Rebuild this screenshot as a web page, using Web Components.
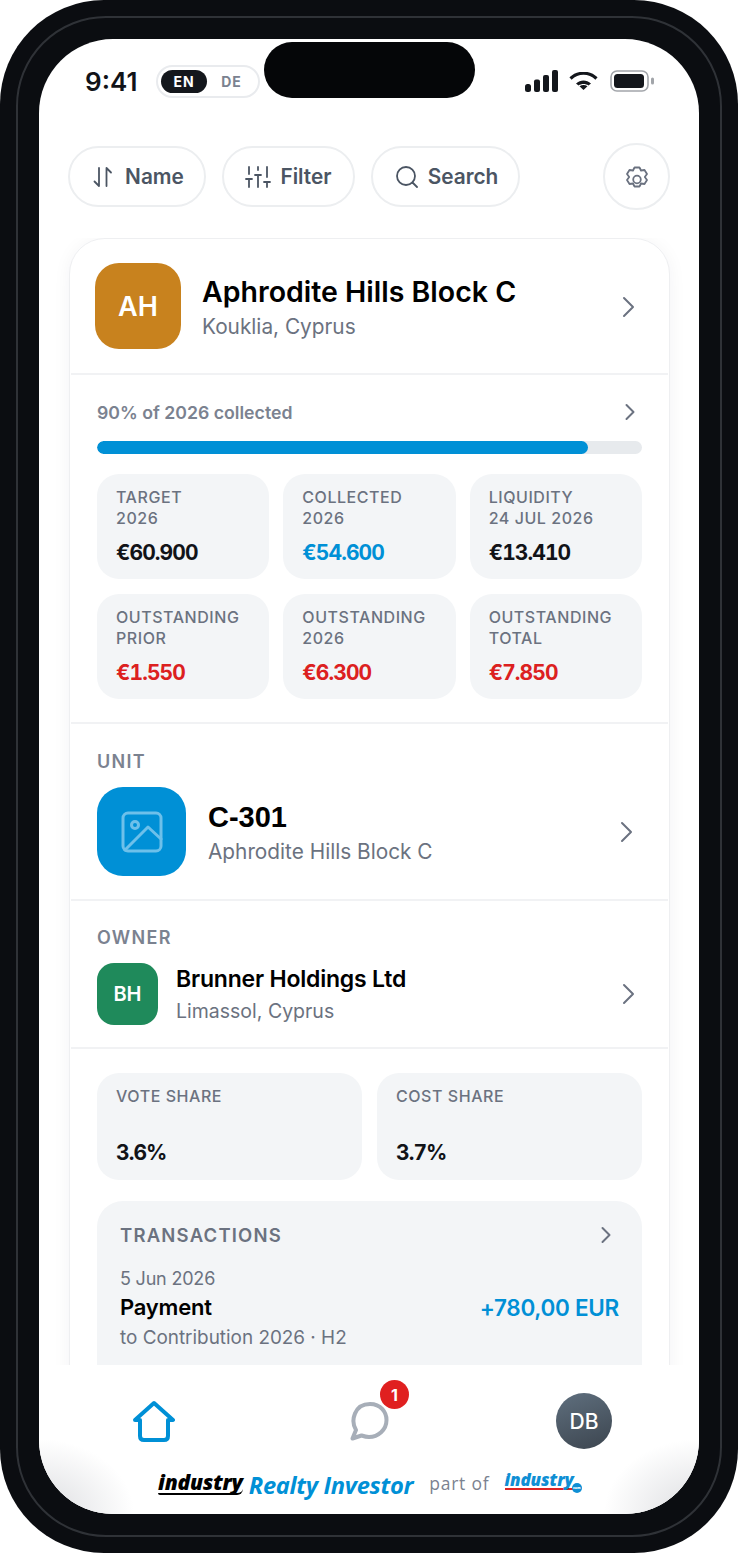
<!DOCTYPE html>
<html>
<head>
<meta charset="utf-8">
<style>
  html, body { margin: 0; padding: 0; background: #fff; }
</style>
</head>
<body>
<phone-frame>
  <status-bar slot="status"></status-bar>
  <tool-bar slot="tools">
    <tool-pill icon="sort" w="138" gap="11" pad="2">Name</tool-pill>
    <tool-pill icon="filter" w="133" gap="9" pad="0">Filter</tool-pill>
    <tool-pill icon="search" w="149" gap="10" pad="3">Search</tool-pill>
    <gear-button></gear-button>
  </tool-bar>
  <property-card slot="content">
    <card-head initials="AH" title="Aphrodite Hills Block C" sub="Kouklia, Cyprus"></card-head>
    <collect-progress label="90% of 2026 collected" value="90"></collect-progress>
    <tile-grid cols="3">
      <stat-tile l1="TARGET" l2="2026" value="€60.900"></stat-tile>
      <stat-tile l1="COLLECTED" l2="2026" value="€54.600" tone="blue"></stat-tile>
      <stat-tile l1="LIQUIDITY" l2="24 JUL 2026" value="€13.410"></stat-tile>
      <stat-tile l1="OUTSTANDING" l2="PRIOR" value="€1.550" tone="red"></stat-tile>
      <stat-tile l1="OUTSTANDING" l2="2026" value="€6.300" tone="red"></stat-tile>
      <stat-tile l1="OUTSTANDING" l2="TOTAL" value="€7.850" tone="red"></stat-tile>
    </tile-grid>
    <unit-row></unit-row>
    <owner-row></owner-row>
    <tile-grid cols="2">
      <stat-tile tall l1="VOTE SHARE" l2="&nbsp;" value="3.6%"></stat-tile>
      <stat-tile tall l1="COST SHARE" l2="&nbsp;" value="3.7%"></stat-tile>
    </tile-grid>
    <transactions-box></transactions-box>
  </property-card>
  <bottom-nav slot="nav"></bottom-nav>
</phone-frame>

<script>
const FONT = '"Inter", "Liberation Sans", sans-serif';
const CHEVRON = `<svg width="14" height="22" viewBox="0 0 14 22" fill="none" stroke="#6b7280" stroke-width="2" stroke-linecap="round" stroke-linejoin="round"><path d="M3 2l9 9-9 9"/></svg>`;
const CHEVRON_SM = `<svg width="12" height="18" viewBox="0 0 12 18" fill="none" stroke="#6b7280" stroke-width="2" stroke-linecap="round" stroke-linejoin="round"><path d="M2.500 2l7 7-7 7"/></svg>`;

class PhoneFrame extends HTMLElement {
  constructor() {
    super();
    this.attachShadow({ mode: 'open' }).innerHTML = `
      <style>
        :host { display: block; position: relative; width: 738px; height: 1553px; box-sizing: border-box; padding: 39px; background: #0b0d11; border-radius: 104px; font-family: ${FONT}; overflow: hidden; }
        .ring { position: absolute; inset: 16px; border: 2px solid #2f3237; border-radius: 90px; pointer-events: none; }
        .island { position: absolute; left: 264px; top: 42px; width: 211px; height: 56px; border-radius: 28px; background: #050608; }
        .screen { width: 660px; height: 1475px; background: #fff; border-radius: 74px; overflow: hidden; display: flex; flex-direction: column; }
        .scroll { flex: 1; min-height: 0; overflow: hidden; padding: 0 30px; }
      </style>
      <div class="ring"></div>
      <div class="screen">
        <slot name="status"></slot>
        <slot name="tools"></slot>
        <div class="scroll"><slot name="content"></slot></div>
        <slot name="nav"></slot>
      </div>
      <div class="island"></div>`;
  }
}
customElements.define('phone-frame', PhoneFrame);

class StatusBar extends HTMLElement {
  constructor() {
    super();
    this.attachShadow({ mode: 'open' }).innerHTML = `
      <style>
        :host { display: flex; align-items: center; height: 84px; padding: 0 44px 0 46px; box-sizing: border-box; }
        .time { font-size: 26px; font-weight: 600; color: #111318; width: 71px; }
        .lang { display: flex; align-items: center; width: 104px; height: 33px; box-sizing: border-box; border: 2px solid #e9ebee; border-radius: 17px; padding: 0 3px; font-size: 14px; font-weight: 700; letter-spacing: 1px; }
        .on { width: 46px; height: 23px; line-height: 23px; border-radius: 12px; background: #14171c; color: #fff; text-align: center; }
        .off { flex: 1; text-align: center; color: #7b8290; padding-left: 1px; }
        .right { margin-left: auto; display: flex; align-items: center; gap: 11px; }
        .batt { margin-left: 1px; }
      </style>
      <span class="time">9:41</span>
      <div class="lang"><span class="on">EN</span><span class="off">DE</span></div>
      <div class="right">
        <svg width="33" height="22" viewBox="0 0 33 22" fill="#14171c"><rect x="0" y="14" width="6" height="8" rx="2.500"/><rect x="9" y="9.500" width="6" height="12.500" rx="2"/><rect x="18" y="5" width="6" height="17" rx="2"/><rect x="27" y="0" width="6" height="22" rx="2"/></svg>
        <svg width="29" height="18" viewBox="0 0 29 18"><path d="M1.500 6.500C9 -0.500 20 -0.500 27.500 6.500" fill="none" stroke="#14171c" stroke-width="3.200"/><path d="M7 11.500C11.500 7.500 17.500 7.500 22 11.500L19.500 13.500C16.500 11.500 12.500 11.500 9.500 13.500Z" fill="#14171c"/><path d="M10.500 14.200C13 12.700 16 12.700 18.500 14.200L14.500 18Z" fill="#14171c"/></svg>
        <svg class="batt" width="45" height="22" viewBox="0 0 45 22"><rect x="1" y="1" width="37" height="20" rx="6" fill="none" stroke="#a2a5aa" stroke-width="1.600"/><rect x="4" y="4" width="30" height="14" rx="3.500" fill="#14171c"/><rect x="41" y="7.500" width="3" height="7" rx="1.500" fill="#a2a5aa"/></svg>
      </div>`;
  }
}
customElements.define('status-bar', StatusBar);

class ToolBar extends HTMLElement {
  constructor() {
    super();
    this.attachShadow({ mode: 'open' }).innerHTML = `
      <style>
        :host { display: flex; align-items: center; gap: 16px; height: 67px; padding: 20px 29px 28px 29px; }
      </style>
      <slot></slot>`;
  }
}
customElements.define('tool-bar', ToolBar);

const TOOL_ICONS = {
  sort: `<svg width="22" height="22" viewBox="0 0 22 22" fill="none" stroke="#4b5563" stroke-width="1.800" stroke-linecap="round" stroke-linejoin="round"><path d="M7 2v18L2.500 15.500"/><path d="M14.500 20V2L19 6.500"/></svg>`,
  filter: `<svg width="26" height="22" viewBox="0 0 26 22" fill="none" stroke="#4b5563" stroke-width="1.800" stroke-linecap="round"><path d="M4 1v7M4 13v8M13 1v3M13 9v12M22 1v10M22 16v5M1 13h6M10 9h6M19 16h6"/></svg>`,
  search: `<svg width="22" height="22" viewBox="0 0 22 22" fill="none" stroke="#4b5563" stroke-width="1.800" stroke-linecap="round"><circle cx="10" cy="10" r="9"/><path d="M16.500 16.500L21 21"/></svg>`
};

class ToolPill extends HTMLElement {
  constructor() {
    super();
    this.attachShadow({ mode: 'open' });
  }
  connectedCallback() {
    const icon = TOOL_ICONS[this.getAttribute('icon')] || '';
    const w = this.getAttribute('w');
    this.shadowRoot.innerHTML = `
      <style>
        :host { display: flex; align-items: center; justify-content: center; gap: ${this.getAttribute('gap')}px; padding-left: ${this.getAttribute('pad')}px; width: ${w}px; height: 61px; box-sizing: border-box; border: 2px solid #eceef0; border-radius: 31px; font-size: 20.800px; font-weight: 600; color: #4b5563; }
        svg { display: block; }
      </style>
      ${icon}<slot></slot>`;
  }
}
customElements.define('tool-pill', ToolPill);

class GearButton extends HTMLElement {
  constructor() {
    super();
    this.attachShadow({ mode: 'open' }).innerHTML = `
      <style>
        :host { display: flex; align-items: center; justify-content: center; width: 67px; height: 67px; box-sizing: border-box; border: 2px solid #eceef0; border-radius: 50%; margin-left: auto; }
      </style>
      <svg width="22" height="22" viewBox="0 0 22 22" fill="none" stroke="#6b7280" stroke-width="1.800" stroke-linejoin="round"><path d="M8.500 1.500H13.500L15 4.500L18.500 4L21 8L18.800 11L21 14L18.500 18L15 17.500L13.500 20.500H8.500L7 17.500L3.500 18L1 14L3.200 11L1 8L3.500 4L7 4.500Z"/><circle cx="11" cy="13.500" r="3.800"/></svg>`;
  }
}
customElements.define('gear-button', GearButton);

class PropertyCard extends HTMLElement {
  constructor() {
    super();
    this.attachShadow({ mode: 'open' }).innerHTML = `
      <style>
        :host { display: block; box-sizing: border-box; width: 601px; height: 1500px; border: 1px solid #eeeff1; padding: 1px 1px 0; border-radius: 36px; box-shadow: 0 2px 18px rgba(20,30,50,.05); background: #fff; }
      </style>
      <slot></slot>`;
  }
}
customElements.define('property-card', PropertyCard);

class CardHead extends HTMLElement {
  constructor() {
    super();
    this.attachShadow({ mode: 'open' });
  }
  connectedCallback() {
    this.shadowRoot.innerHTML = `
      <style>
        :host { display: flex; align-items: center; height: 135px; box-sizing: border-box; padding: 0 33px 0 24px; border-bottom: 2px solid #f1f2f4; }
        .av { width: 86px; height: 86px; border-radius: 24px; background: #c8821e; color: #fff; font-size: 27px; font-weight: 600; display: flex; align-items: center; justify-content: center; flex: none; margin-top: -1px; }
        .txt { margin-left: 21px; flex: 1; margin-top: 1px; }
        .t { font-size: 28.500px; font-weight: 600; color: #000; line-height: 36px; white-space: nowrap; }
        .s { font-size: 20.800px; color: #6b7280; line-height: 26px; margin-top: 4px; }
      </style>
      <div class="av">${this.getAttribute('initials')}</div>
      <div class="txt"><div class="t">${this.getAttribute('title')}</div><div class="s">${this.getAttribute('sub')}</div></div>
      ${CHEVRON}`;
  }
}
customElements.define('card-head', CardHead);

class CollectProgress extends HTMLElement {
  constructor() {
    super();
    this.attachShadow({ mode: 'open' });
  }
  connectedCallback() {
    this.shadowRoot.innerHTML = `
      <style>
        :host { display: block; padding: 24px 26px 0 26px; }
        .top { display: flex; align-items: center; justify-content: space-between; height: 26px; padding-right: 6px; font-size: 17.700px; font-weight: 600; color: #7b8290; }
        .track { height: 13px; margin-top: 16px; border-radius: 7px; background: #e7eaed; overflow: hidden; }
        .fill { height: 100%; width: ${this.getAttribute('value')}%; border-radius: 7px; background: #0090d6; }
      </style>
      <div class="top"><span>${this.getAttribute('label')}</span>${CHEVRON_SM}</div>
      <div class="track"><div class="fill"></div></div>`;
  }
}
customElements.define('collect-progress', CollectProgress);

class TileGrid extends HTMLElement {
  constructor() {
    super();
    this.attachShadow({ mode: 'open' });
  }
  connectedCallback() {
    const two = this.getAttribute('cols') === '2';
    this.shadowRoot.innerHTML = `
      <style>
        :host { display: grid; grid-template-columns: repeat(${this.getAttribute('cols')}, 1fr); column-gap: ${two ? 15 : 14}px; row-gap: 15px; padding: ${two ? '24px 26px 0' : '20px 26px 23px'}; }
      </style>
      <slot></slot>`;
  }
}
customElements.define('tile-grid', TileGrid);

class StatTile extends HTMLElement {
  constructor() {
    super();
    this.attachShadow({ mode: 'open' });
  }
  connectedCallback() {
    const tone = { blue: '#0090d6', red: '#dc2020' }[this.getAttribute('tone')] || '#111318';
    const tall = this.hasAttribute('tall');
    this.shadowRoot.innerHTML = `
      <style>
        :host { display: block; height: ${tall ? 107 : 105}px; box-sizing: border-box; padding: 13px 10px 0 19px; border-radius: 22px; background: #f3f5f7; }
        .l { font-size: 16px; line-height: 21px; font-weight: 500; color: #6b7280; letter-spacing: .55px; white-space: nowrap; }
        .v { font-size: 21px; line-height: 28px; font-weight: 700; letter-spacing: -.9px; font-variant-numeric: tabular-nums; color: ${tone}; margin-top: ${tall ? 11 : 10}px; }
      </style>
      <div class="l">${this.getAttribute('l1')}</div>
      <div class="l">${this.getAttribute('l2')}</div>
      <div class="v">${this.getAttribute('value')}</div>`;
  }
}
customElements.define('stat-tile', StatTile);

class UnitRow extends HTMLElement {
  constructor() {
    super();
    this.attachShadow({ mode: 'open' }).innerHTML = `
      <style>
        :host { display: block; height: 179px; box-sizing: border-box; padding: 26px 35px 0 26px; border-top: 2px solid #f1f2f4; border-bottom: 2px solid #f1f2f4; }
        .h { font-size: 18px; font-weight: 600; color: #7b8290; letter-spacing: 1.300px; line-height: 24px; }
        .row { display: flex; align-items: center; margin-top: 13px; }
        .pic { width: 89px; height: 89px; border-radius: 26px; background: #0090d6; display: flex; align-items: center; justify-content: center; flex: none; }
        .txt { margin-left: 22px; flex: 1; }
        .t { font-family: "Liberation Sans", sans-serif; font-size: 29px; font-weight: 700; color: #000; line-height: 36px; }
        .s { font-size: 20.800px; color: #6b7280; line-height: 26px; margin-top: 4px; }
      </style>
      <div class="h">UNIT</div>
      <div class="row">
        <div class="pic"><svg width="42" height="42" viewBox="0 0 42 42" fill="none" stroke="#6dc0ea" stroke-width="3" stroke-linejoin="round" stroke-linecap="round"><rect x="2" y="2" width="38" height="38" rx="5"/><circle cx="14" cy="14" r="3.500"/><path d="M4 39L27 16L40 28"/></svg></div>
        <div class="txt"><div class="t">C-301</div><div class="s">Aphrodite Hills Block C</div></div>
        ${CHEVRON}
      </div>`;
  }
}
customElements.define('unit-row', UnitRow);

class OwnerRow extends HTMLElement {
  constructor() {
    super();
    this.attachShadow({ mode: 'open' }).innerHTML = `
      <style>
        :host { display: block; height: 148px; box-sizing: border-box; padding: 25px 33px 0 26px; border-bottom: 2px solid #f1f2f4; }
        .h { font-size: 18px; font-weight: 600; color: #7b8290; letter-spacing: 1.300px; line-height: 24px; }
        .row { display: flex; align-items: center; margin-top: 13px; }
        .av { width: 61px; height: 62px; border-radius: 17px; background: #1f8a5b; color: #fff; font-size: 20px; font-weight: 600; display: flex; align-items: center; justify-content: center; flex: none; }
        .txt { margin-left: 18px; flex: 1; }
        .t { font-size: 23px; font-weight: 600; color: #000; line-height: 30px; letter-spacing: -0.200px; }
        .s { font-size: 19.500px; color: #6b7280; line-height: 26px; margin-top: 4px; }
      </style>
      <div class="h">OWNER</div>
      <div class="row">
        <div class="av">BH</div>
        <div class="txt"><div class="t">Brunner Holdings Ltd</div><div class="s">Limassol, Cyprus</div></div>
        ${CHEVRON}
      </div>`;
  }
}
customElements.define('owner-row', OwnerRow);

class TransactionsBox extends HTMLElement {
  constructor() {
    super();
    this.attachShadow({ mode: 'open' }).innerHTML = `
      <style>
        :host { display: block; margin: 21px 26px 0; padding: 21px 23px 70px; border-radius: 26px; background: #f3f5f7; }
        .top { display: flex; align-items: center; justify-content: space-between; height: 26px; padding-right: 7px; font-size: 18.500px; font-weight: 600; color: #6b7280; letter-spacing: 1.200px; }
        .d { font-size: 18px; letter-spacing: -0.200px; color: #6b7280; line-height: 24px; margin-top: 19px; }
        .mid { display: flex; align-items: center; justify-content: space-between; margin-top: 1px; }
        .p { font-size: 22px; font-weight: 600; color: #000; line-height: 30px; letter-spacing: -0.200px; }
        .a { font-size: 22.500px; font-weight: 600; color: #0090d6; letter-spacing: -0.300px; }
        .s { font-size: 18.900px; color: #6b7280; line-height: 26px; margin-top: 3px; }
      </style>
      <div class="top"><span>TRANSACTIONS</span>${CHEVRON_SM}</div>
      <div class="d">5 Jun 2026</div>
      <div class="mid"><span class="p">Payment</span><span class="a">+780,00 EUR</span></div>
      <div class="s">to Contribution 2026 · H2</div>`;
  }
}
customElements.define('transactions-box', TransactionsBox);

class BottomNav extends HTMLElement {
  constructor() {
    super();
    this.attachShadow({ mode: 'open' }).innerHTML = `
      <style>
        :host { display: block; height: 149px; box-sizing: border-box; background: radial-gradient(95px 75px at 0% 100%, #dcdde0, rgba(255,255,255,0)), radial-gradient(95px 75px at 100% 100%, #dcdde0, rgba(255,255,255,0)), #fff; }
        .icons { display: grid; grid-template-columns: 230px 1fr 230px; height: 112px; align-items: center; justify-items: center; }
        .home { justify-self: start; margin-left: 94px; }
        .chat { position: relative; width: 40px; height: 40px; }
        .badge { position: absolute; left: 31px; top: -21px; width: 29px; height: 29px; border-radius: 50%; background: #e02020; color: #fff; font-size: 16px; font-weight: 700; display: flex; align-items: center; justify-content: center; }
        .db { justify-self: end; margin-right: 87px; width: 56px; height: 56px; border-radius: 50%; background: linear-gradient(160deg, #5f6f7e, #3c454f); color: #fff; font-size: 21px; font-weight: 500; display: flex; align-items: center; justify-content: center; }
        .foot { display: flex; align-items: center; height: 30px; padding-left: 119px; font-family: "Open Sans", sans-serif; white-space: nowrap; margin-top: -9px; }
        .ind { font-size: 21px; font-weight: 800; font-style: italic; color: #000; border-bottom: 2.500px solid #000; border-radius: 0 0 6px 2px; line-height: 21px; letter-spacing: -.2px; }
        .ri { font-size: 23.700px; font-weight: 700; font-style: italic; color: #0090d6; margin-left: 6px; margin-top: 3px; letter-spacing: -0.300px; }
        .po { font-size: 17.500px; font-weight: 500; color: #7b8290; margin-left: 16px; letter-spacing: .8px; }
        .ic { position: relative; margin-left: 15px; font-size: 17px; font-weight: 800; font-style: italic; color: #0f8fd4; border-bottom: 2.500px solid #dc2626; line-height: 17px; letter-spacing: -.1px; margin-top: -6px; }
        .dot { position: absolute; right: -8px; top: 12px; width: 10px; height: 10px; border-radius: 50%; background: #0f8fd4; color: #fff; font-size: 3.500px; line-height: 10px; text-align: center; font-style: normal; }
      </style>
      <div class="icons">
        <svg class="home" width="42" height="42" viewBox="0 0 42 42" fill="none" stroke="#0090d6" stroke-width="4" stroke-linejoin="round" stroke-linecap="round"><path d="M2 20L21 3L40 20H35V36Q35 40 31 40H11Q7 40 7 36V20Z"/></svg>
        <div class="chat">
          <svg width="40" height="40" viewBox="0 0 40 40" fill="none" stroke="#a7aeb8" stroke-width="4" stroke-linejoin="round"><path d="M3.500 37.500L7 29C1.500 20 5 3 21 3C32 3 37.500 11.500 37.500 19C37.500 29 29 36 20 36C17 36 14 35 12.500 34.500Z"/></svg>
          <div class="badge">1</div>
        </div>
        <div class="db">DB</div>
      </div>
      <div class="foot">
        <span class="ind">industry</span>
        <span class="ri">Realty Investor</span>
        <span class="po">part of</span>
        <span class="ic">industry<span class="dot">com</span></span>
      </div>`;
  }
}
customElements.define('bottom-nav', BottomNav);
</script>
</body>
</html>
